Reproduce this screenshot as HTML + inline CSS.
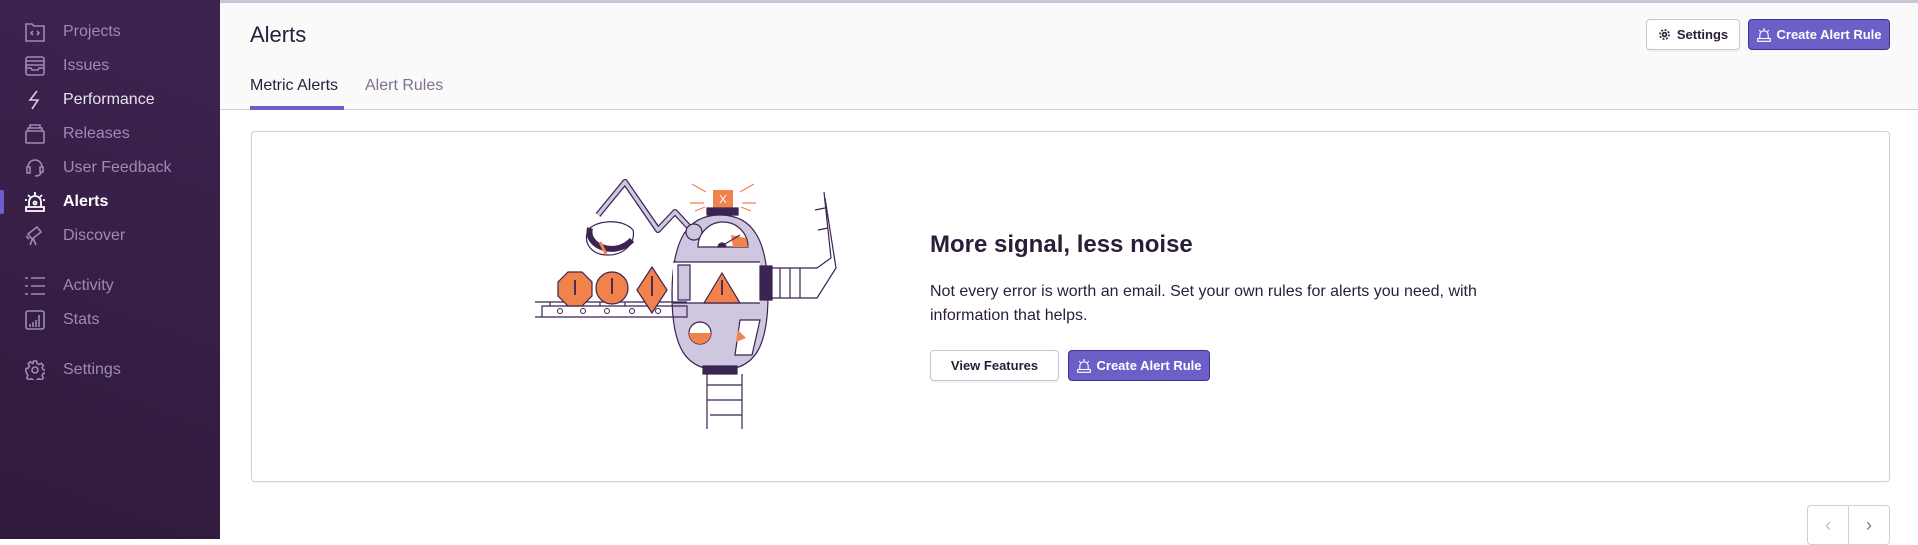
<!DOCTYPE html>
<html><head><meta charset="utf-8"><style>
*{box-sizing:border-box;margin:0;padding:0}
body{width:1918px;height:539px;overflow:hidden;font-family:"Liberation Sans",sans-serif;background:#fff;position:relative}
.sb{position:absolute;left:0;top:0;width:220px;height:539px;background:linear-gradient(200deg,#3e2350 0%,#2f1a3b 100%)}
.it{position:absolute;left:0;height:34px;width:220px;color:#9e8ab4;font-size:16px;line-height:34px}
.it span{position:absolute;left:63px}
.it svg{position:absolute;left:25px;top:7px}
.it.w{color:#e8e2f0}
.it.a{color:#fff}
.bar{position:absolute;left:0;top:190px;width:4px;height:24px;background:#6c5fc7;border-radius:0 2px 2px 0}
.hd{position:absolute;left:220px;top:0;right:0;height:110px;background:#fafafb;border-top:3px solid #cdc3d5;border-bottom:1px solid #d4cbdc}
.title{position:absolute;left:250px;top:22px;font-size:22px;color:#2b1d38}
.tab{position:absolute;top:77px;font-size:16px}
.btn{position:absolute;height:31px;border-radius:4px;font-size:13px;font-weight:bold;display:flex;align-items:center;justify-content:center;gap:6px}
.wb{background:#fff;border:1px solid #cbc3d3;color:#2b1d38;box-shadow:0 2px 0 rgba(0,0,0,.04)}
.pb{background:#6c5fc7;border:1px solid #3d3291;color:#fff}
.panel{position:absolute;left:251px;top:131px;width:1639px;height:351px;border:1px solid #d4cbdc;border-radius:4px;background:#fff;box-shadow:0 1px 2px rgba(0,0,0,.05)}
</style></head><body>
<div class="sb">
<div class="it" style="top:15px"><svg width="20" height="20" viewBox="0 0 20 20" fill="none" stroke="#9e8ab4" stroke-width="1.6"><path d="M1 2h6l2 2h10v15H1z"/><path d="M8 9l-2 2 2 2M12 9l2 2-2 2"/></svg><span>Projects</span></div>
<div class="it" style="top:49px"><svg width="20" height="20" viewBox="0 0 20 20" fill="none" stroke="#9e8ab4" stroke-width="1.6"><rect x="1" y="1" width="18" height="18" rx="2"/><path d="M1 5h18M1 9h18M1 9v3h5l1 2h6l1-2h5"/></svg><span>Issues</span></div>
<div class="it w" style="top:83px"><svg width="20" height="20" viewBox="0 0 20 20" fill="none" stroke="#d6cce0" stroke-width="1.6"><path d="M12 1L5 10h8l-6 9"/></svg><span>Performance</span></div>
<div class="it" style="top:117px"><svg width="20" height="20" viewBox="0 0 20 20" fill="none" stroke="#9e8ab4" stroke-width="1.6"><rect x="1" y="7" width="18" height="12" rx="1"/><path d="M3 7V4h14v3M5 4V1h10v3"/></svg><span>Releases</span></div>
<div class="it" style="top:151px"><svg width="20" height="20" viewBox="0 0 20 20" fill="none" stroke="#9e8ab4" stroke-width="1.6"><path d="M3 9a7 7 0 0 1 14 0M2 9h3v6H2zM15 9h3v5h-3zM16 14c0 3-3 4-6 4"/></svg><span>User Feedback</span></div>
<div class="bar"></div>
<div class="it a" style="top:185px"><svg width="20" height="20" viewBox="0 0 20 20" fill="none" stroke="#fff" stroke-width="1.8"><path d="M4 15v-5a6 6 0 0 1 12 0v5M1 15h18v4H1zM10 0v3M3 3l2 2M17 3l-2 2M0 8h2M18 8h2"/><circle cx="10" cy="11" r="1.5"/></svg><span style="font-weight:bold">Alerts</span></div>
<div class="it" style="top:219px"><svg width="20" height="20" viewBox="0 0 20 20" fill="none" stroke="#9e8ab4" stroke-width="1.6"><path d="M3 8l9-7 4 5-9 7zM1 10l3 3M8 12l-3 7M8 12l3 7"/></svg><span>Discover</span></div>
<div class="it" style="top:269px"><svg width="20" height="20" viewBox="0 0 20 20" fill="none" stroke="#9e8ab4" stroke-width="1.6"><path d="M0 2h3M6 2h14M0 10h3M6 10h14M0 18h3M6 18h14"/></svg><span>Activity</span></div>
<div class="it" style="top:303px"><svg width="20" height="20" viewBox="0 0 20 20" fill="none" stroke="#9e8ab4" stroke-width="1.6"><rect x="1" y="1" width="18" height="18" rx="2"/><path d="M5 17v-3M8 17v-5M11 17v-7M14 17V5"/></svg><span>Stats</span></div>
<div class="it" style="top:353px"><svg width="20" height="20" viewBox="0 0 20 20" fill="none" stroke="#9e8ab4" stroke-width="1.6"><circle cx="10" cy="10" r="3"/><path d="M8.5 1h3l.5 2.5 2 1 2.3-1.2 2 2-1.2 2.3 1 2 2.4.5v3l-2.4.5-1 2 1.2 2.3-2 2-2.3-1.2-2 1-.5 2.4h-3l-.5-2.4-2-1-2.300 1.2-2-2 1.2-2.3-1-2L1 11.5v-3l2.4-.5 1-2-1.2-2.3 2-2L7.5 3.5l.5-.1z"/></svg><span>Settings</span></div>
</div>

<div class="hd"></div>
<div class="title">Alerts</div>
<div class="tab" style="left:250px;color:#2b1d38">Metric Alerts</div>
<div style="position:absolute;left:250px;top:106px;width:94px;height:4px;background:#6c5fc7"></div>
<div class="tab" style="left:365px;color:#80708f">Alert Rules</div>
<div class="btn wb" style="left:1646px;top:19px;width:94px"><svg width="13" height="13" viewBox="0 0 20 20" fill="none" stroke="#2b1d38" stroke-width="2.5"><circle cx="10" cy="10" r="3"/><circle cx="10" cy="10" r="7" stroke-dasharray="3 2.5"/></svg>Settings</div>
<div class="btn pb" style="left:1748px;top:19px;width:142px"><svg width="14" height="14" viewBox="0 0 20 20" fill="none" stroke="#fff" stroke-width="1.6"><path d="M4 15v-5a6 6 0 0 1 12 0v5M1 15h18v4H1zM10 0v3M3 3l2 2M17 3l-2 2"/></svg>Create Alert Rule</div>

<div class="panel"></div>
<svg style="position:absolute;left:520px;top:170px" width="340" height="270" viewBox="0 0 340 270" fill="none" stroke="#3b2451" stroke-width="1.2">
<!-- arm -->
<path d="M78 45L105 12l33 48 17-18 14 15" stroke="#3b2451" stroke-width="6" stroke-linejoin="round"/>
<path d="M78 45L105 12l33 48 17-18 14 15" stroke="#cfc6e0" stroke-width="3.5" stroke-linejoin="round"/>
<!-- camera -->
<path d="M68 60c8-10 35-12 45 0 3 12-8 25-25 25s-25-12-20-25z" fill="#fff"/>
<path d="M70 58c-5 18 25 30 42 12" stroke-width="6"/>
<path d="M80 72l6 12" stroke="#f2824b" stroke-width="3"/>
<!-- siren -->
<path d="M193 20h20v18h-20z" fill="#f2824b" stroke="none"/>
<path d="M200 25l6 8M206 25l-6 8" stroke="#fff" stroke-width="1"/>
<path d="M187 38h31v7h-31z" fill="#3b2451"/>
<path d="M172 14l14 8M234 14l-14 8M170 33h14M236 33h-14M175 41l10-4M231 41l-10-4" stroke="#f2824b"/>
<!-- body -->
<path d="M152 125c0-55 15-80 48-80s48 25 48 80-15 75-48 75-48-20-48-75z" fill="#cfc6e0"/>
<circle cx="174" cy="62" r="8" fill="#cfc6e0"/>
<path d="M178 77a25 25 0 0 1 50 0z" fill="#fff"/>
<path d="M213 77l-2-12 15 3 2 9z" fill="#f2824b" stroke="none"/>
<path d="M200 77l20-12" />
<path d="M198 77a4 4 0 0 1 8 0z" fill="#3b2451"/>
<path d="M153 92h87v41h-87z" fill="#fff" stroke="none"/>
<path d="M153 92h87M153 133h87"/>
<path d="M158 95h12v35h-12z" fill="#cfc6e0"/>
<path d="M202 103l-18 30h36z" fill="#f2824b"/><path d="M202 110v15" stroke-width="1.8"/>
<path d="M240 96h12v34h-12z" fill="#3b2451"/>
<path d="M252 98h45l14-10-7-66M252 128h45l19-30-11-70"/>
<path d="M260 98v30M270 98v30M280 98v30M298 60l10-2M295 40l10-2"/>
<!-- bottom -->
<path d="M183 196h34v8h-34z" fill="#3b2451"/>
<path d="M187 204v55M222 204v55M187 215h35M187 230h35M190 245h32"/>
<circle cx="180" cy="163" r="11" fill="#fff"/><path d="M169 163h22a11 11 0 0 1-22 0z" fill="#f2824b" stroke="none"/>
<path d="M220 150h20l-8 35h-17z" fill="#fff"/>
<path d="M218 160l8 8-10 4z" fill="#f2824b" stroke="none"/>
<!-- belt -->
<path d="M15 132h152M22 136h145v11H22zM15 147h152"/>
<path d="M30 132v4M55 132v4M80 132v4M105 132v4M130 132v4"/>
<g stroke-width="1"><circle cx="40" cy="141" r="2.5"/><circle cx="63" cy="141" r="2.5"/><circle cx="87" cy="141" r="2.5"/><circle cx="112" cy="141" r="2.5"/><circle cx="138" cy="141" r="2.5"/></g>
<!-- signs -->
<path d="M48 102h14l10 10v14l-10 10H48l-10-10v-14z" fill="#f2824b"/>
<circle cx="92" cy="118" r="16" fill="#f2824b"/>
<path d="M132 97l15 23-15 23-15-23z" fill="#f2824b"/>
<path d="M55 110v15M92 108v16M132 106v20" stroke-width="1.8"/>
</svg>
<div style="position:absolute;left:930px;top:231px;font-size:24px;font-weight:bold;color:#2b1d38">More signal, less noise</div>
<div style="position:absolute;left:930px;top:280px;font-size:16px;line-height:24px;color:#2b1d38;width:620px">Not every error is worth an email. Set your own rules for alerts you need, with information that helps.</div>
<div class="btn wb" style="left:930px;top:350px;width:129px">View Features</div>
<div class="btn pb" style="left:1068px;top:350px;width:142px"><svg width="14" height="14" viewBox="0 0 20 20" fill="none" stroke="#fff" stroke-width="1.6"><path d="M4 15v-5a6 6 0 0 1 12 0v5M1 15h18v4H1zM10 0v3M3 3l2 2M17 3l-2 2"/></svg>Create Alert Rule</div>
<div style="position:absolute;left:1807px;top:505px;width:83px;height:40px;border:1px solid #d4cbdc;border-radius:4px;display:flex">
<div style="flex:1;border-right:1px solid #d4cbdc;display:flex;align-items:center;justify-content:center;color:#c1b8c9;font-size:18px">‹</div>
<div style="flex:1;display:flex;align-items:center;justify-content:center;color:#80708f;font-size:18px">›</div></div>
</body></html>
